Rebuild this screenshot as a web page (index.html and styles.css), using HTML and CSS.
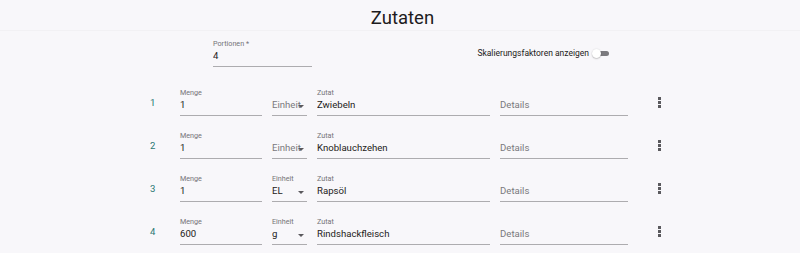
FILE: index.html
```html
<!DOCTYPE html>
<html lang="de">

<head>
    <meta charset="UTF-8">
    <meta name="viewport" content="width=device-width, initial-scale=1.0">
    <title>Zutaten</title>
    <link rel="stylesheet" href="styles.css">
</head>

<body>
    <header class="page-header">
        <h1>Zutaten</h1>
    </header>

    <div class="top-row">
        <div class="field portions">
            <label class="field-label">Portionen *</label>
            <div class="field-value">4</div>
        </div>
        <div class="switch-group">
            <span class="switch-text">Skalierungsfaktoren anzeigen</span>
            <span class="switch">
                <span class="switch-track"></span>
                <span class="switch-thumb"></span>
            </span>
        </div>
    </div>

    <div class="ingredients">
        <div class="ingredient-row">
            <div class="row-number">1</div>
            <div class="field">
                <label class="field-label">Menge</label>
                <div class="field-value">1</div>
            </div>
            <div class="field select">
                <label class="field-label"></label>
                <div class="field-value placeholder">Einheit<span class="arrow"></span></div>
            </div>
            <div class="field">
                <label class="field-label">Zutat</label>
                <div class="field-value">Zwiebeln</div>
            </div>
            <div class="field">
                <label class="field-label"></label>
                <div class="field-value placeholder">Details</div>
            </div>
            <div class="row-menu"><span></span><span></span><span></span></div>
        </div>

        <div class="ingredient-row">
            <div class="row-number">2</div>
            <div class="field">
                <label class="field-label">Menge</label>
                <div class="field-value">1</div>
            </div>
            <div class="field select">
                <label class="field-label"></label>
                <div class="field-value placeholder">Einheit<span class="arrow"></span></div>
            </div>
            <div class="field">
                <label class="field-label">Zutat</label>
                <div class="field-value">Knoblauchzehen</div>
            </div>
            <div class="field">
                <label class="field-label"></label>
                <div class="field-value placeholder">Details</div>
            </div>
            <div class="row-menu"><span></span><span></span><span></span></div>
        </div>

        <div class="ingredient-row">
            <div class="row-number">3</div>
            <div class="field">
                <label class="field-label">Menge</label>
                <div class="field-value">1</div>
            </div>
            <div class="field select">
                <label class="field-label">Einheit</label>
                <div class="field-value">EL<span class="arrow"></span></div>
            </div>
            <div class="field">
                <label class="field-label">Zutat</label>
                <div class="field-value">Rapsöl</div>
            </div>
            <div class="field">
                <label class="field-label"></label>
                <div class="field-value placeholder">Details</div>
            </div>
            <div class="row-menu"><span></span><span></span><span></span></div>
        </div>

        <div class="ingredient-row">
            <div class="row-number">4</div>
            <div class="field">
                <label class="field-label">Menge</label>
                <div class="field-value">600</div>
            </div>
            <div class="field select">
                <label class="field-label">Einheit</label>
                <div class="field-value">g<span class="arrow"></span></div>
            </div>
            <div class="field">
                <label class="field-label">Zutat</label>
                <div class="field-value">Rindshackfleisch</div>
            </div>
            <div class="field">
                <label class="field-label"></label>
                <div class="field-value placeholder">Details</div>
            </div>
            <div class="row-menu"><span></span><span></span><span></span></div>
        </div>
    </div>
</body>

</html>
```

FILE: styles.css
```css
* {
    margin: 0;
    padding: 0;
    box-sizing: border-box;
}

body {
    font-family: Roboto, "Noto Sans", sans-serif;
    color: #1d1b20;
    background: #f8f7fa;
    width: 800px;
    height: 253px;
    overflow: hidden;
}

.page-header {
    padding-top: 6px;
    border-bottom: 1px solid #f2f1f4;
}

h1 {
    font-size: 18.5px;
    font-weight: 400;
    line-height: 24px;
    text-align: center;
    padding-left: 5px;
    color: #1d1b20;
}

.top-row {
    display: flex;
    align-items: center;
    justify-content: space-between;
    margin-top: 8px;
    padding: 0 191px 0 213px;
}

.field {
    display: flex;
    flex-direction: column;
    border-bottom: 1px solid #adacaf;
    padding-bottom: 3px;
    position: relative;
}

.field.portions {
    width: 99px;
}

.field-label {
    display: block;
    height: 10px;
    font-size: 7.2px;
    line-height: 10px;
    color: #747377;
}

.field-value {
    font-size: 9.6px;
    line-height: 14px;
    white-space: nowrap;
    overflow: hidden;
    position: relative;
}

.field-value.placeholder {
    color: #7a797d;
}

.switch-group {
    display: flex;
    align-items: center;
    gap: 3px;
}

.switch-text {
    font-size: 8.5px;
    color: #1d1b20;
}

.switch {
    position: relative;
    width: 17px;
    height: 10px;
}

.switch-track {
    position: absolute;
    left: 4px;
    top: 2.5px;
    width: 13px;
    height: 5px;
    border-radius: 3px;
    background: #7b7a7e;
}

.switch-thumb {
    position: absolute;
    left: 0;
    top: 0.5px;
    width: 9px;
    height: 9px;
    border-radius: 50%;
    background: #fff;
    box-shadow: 0 0.5px 1.5px rgba(0, 0, 0, 0.35);
}

.ingredients {
    margin-top: 21px;
}

.ingredient-row {
    display: grid;
    grid-template-columns: 20px 82px 35px 173px 128px 43px;
    column-gap: 10px;
    align-items: start;
    padding-left: 150px;
    margin-bottom: 15px;
}

.row-number {
    padding-top: 8px;
    font-size: 9.6px;
    line-height: 14px;
    color: #2a7872;
}

.arrow {
    position: absolute;
    right: 3px;
    top: 6.5px;
    width: 0;
    height: 0;
    border-left: 3px solid transparent;
    border-right: 3px solid transparent;
    border-top: 3px solid #5a595d;
}

.row-menu {
    display: flex;
    flex-direction: column;
    align-items: center;
    gap: 1.5px;
    padding-top: 9px;
}

.row-menu span {
    width: 2.5px;
    height: 2.5px;
    background: #5a595d;
}
```
